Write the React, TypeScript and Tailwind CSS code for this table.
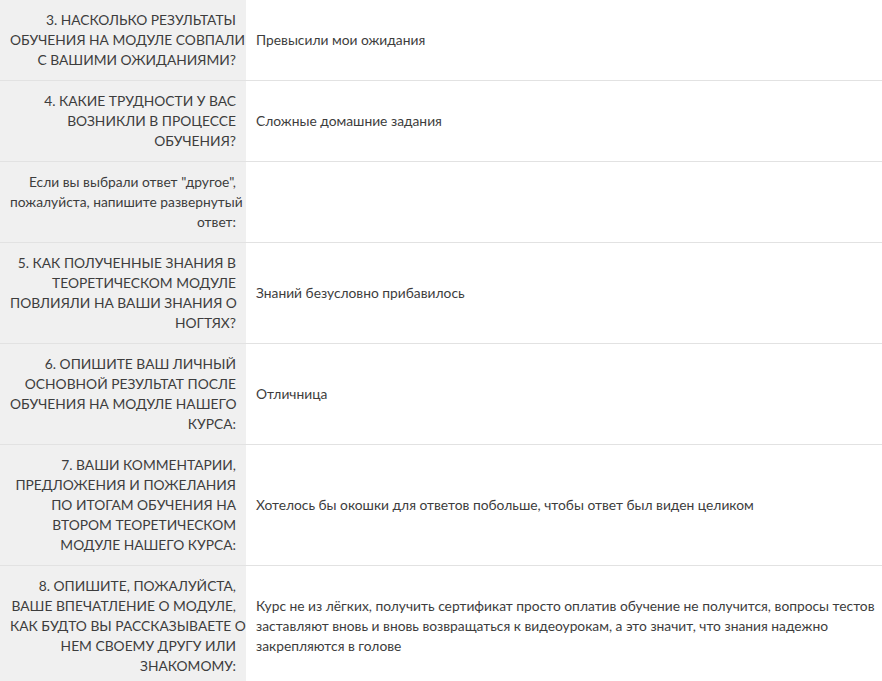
const rows: { q: string[]; a: string[] }[] = [
  {
    q: ["3. НАСКОЛЬКО РЕЗУЛЬТАТЫ", "ОБУЧЕНИЯ НА МОДУЛЕ СОВПАЛИ", "С ВАШИМИ ОЖИДАНИЯМИ?"],
    a: ["Превысили мои ожидания"],
  },
  {
    q: ["4. КАКИЕ ТРУДНОСТИ У ВАС", "ВОЗНИКЛИ В ПРОЦЕССЕ", "ОБУЧЕНИЯ?"],
    a: ["Сложные домашние задания"],
  },
  {
    q: ['Если вы выбрали ответ "другое",', "пожалуйста, напишите развернутый", "ответ:"],
    a: [],
  },
  {
    q: ["5. КАК ПОЛУЧЕННЫЕ ЗНАНИЯ В", "ТЕОРЕТИЧЕСКОМ МОДУЛЕ", "ПОВЛИЯЛИ НА ВАШИ ЗНАНИЯ О", "НОГТЯХ?"],
    a: ["Знаний безусловно прибавилось"],
  },
  {
    q: ["6. ОПИШИТЕ ВАШ ЛИЧНЫЙ", "ОСНОВНОЙ РЕЗУЛЬТАТ ПОСЛЕ", "ОБУЧЕНИЯ НА МОДУЛЕ НАШЕГО", "КУРСА:"],
    a: ["Отличница"],
  },
  {
    q: [
      "7. ВАШИ КОММЕНТАРИИ,",
      "ПРЕДЛОЖЕНИЯ И ПОЖЕЛАНИЯ",
      "ПО ИТОГАМ ОБУЧЕНИЯ НА",
      "ВТОРОМ ТЕОРЕТИЧЕСКОМ",
      "МОДУЛЕ НАШЕГО КУРСА:",
    ],
    a: ["Хотелось бы окошки для ответов побольше, чтобы ответ был виден целиком"],
  },
  {
    q: [
      "8. ОПИШИТЕ, ПОЖАЛУЙСТА,",
      "ВАШЕ ВПЕЧАТЛЕНИЕ О МОДУЛЕ,",
      "КАК БУДТО ВЫ РАССКАЗЫВАЕТЕ О",
      "НЕМ СВОЕМУ ДРУГУ ИЛИ",
      "ЗНАКОМОМУ:",
    ],
    a: [
      "Курс не из лёгких, получить сертификат просто оплатив обучение не получится, вопросы тестов",
      "заставляют вновь и вновь возвращаться к видеоурокам, а это значит, что знания надежно",
      "закрепляются в голове",
    ],
  },
];

export default function App() {
  return (
    <div className="w-[882px] h-[681px] overflow-hidden bg-white font-['Lato',sans-serif] text-[13.8px] leading-5 text-[#3d3d3d]">
      {rows.map((r, i) => (
        <div key={i} className="flex border-b border-[#e2e2e2]">
          <div className="w-[246px] shrink-0 bg-[#f0f0f0] px-[10px] py-[10px] text-right">
            {r.q.map((line, j) => (
              <div key={j} className="whitespace-nowrap">
                {line}
              </div>
            ))}
          </div>
          <div className="flex flex-1 flex-col justify-center px-[10px] py-[10px]">
            {r.a.map((line, j) => (
              <div key={j} className="whitespace-nowrap">
                {line}
              </div>
            ))}
          </div>
        </div>
      ))}
    </div>
  );
}
